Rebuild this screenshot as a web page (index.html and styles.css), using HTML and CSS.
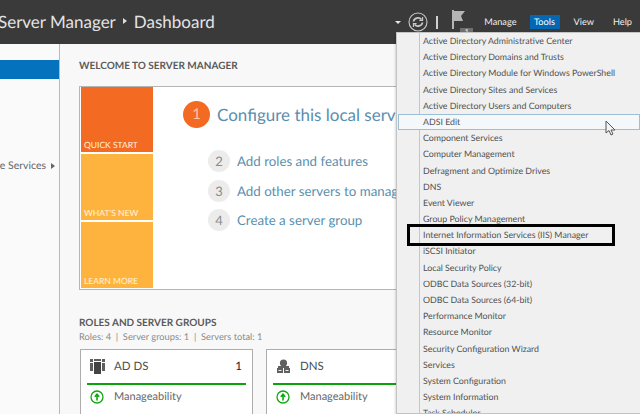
FILE: index.html
```html
<!DOCTYPE html>
<html lang="en">
<head>
<meta charset="utf-8">
<title>Server Manager</title>
<link rel="stylesheet" href="styles.css">
</head>
<body>
<header class="topbar">
  <div class="title"><span>Server Manager</span><i class="crumb"></i><span>Dashboard</span></div>
  <div class="tools">
    <i class="drop"></i>
    <svg class="refresh" width="20" height="20" viewBox="0 0 20 20" fill="none" stroke="#c9c9c9"><circle cx="10" cy="10" r="9" stroke-width="1.1"/><path d="M5.500 9.500a4.500 4 0 0 1 8-2M14.500 10.500a4.500 4 0 0 1-8 2" stroke-width="1.700"/><path d="M14.600 5v3.400h-3.200M5.400 15v-3.400h3.200" stroke-width="1.100"/></svg>
    <i class="divider"></i>
    <div class="flag">
      <svg width="15" height="20" viewBox="0 0 15 20"><path d="M0 0h2v19H0z" fill="#b5b5b5"/><path d="M2 1h11l-4 5 2 5H2z" fill="#b5b5b5"/></svg>
      <b>1</b>
    </div>
    <nav class="menu-bar">
      <span>Manage</span><span class="on">Tools</span><span>View</span><span>Help</span>
    </nav>
  </div>
</header>
<div class="page">
  <aside class="side">
    <div class="side-active"></div>
    <div class="side-item"><span>File and Storage Services</span><i></i></div>
  </aside>
  <main class="main">
    <h2 class="h">WELCOME TO SERVER MANAGER</h2>
    <section class="welcome">
      <div class="tiles">
        <div class="tile t1">QUICK START</div>
        <div class="tile t2">WHAT'S NEW</div>
        <div class="tile t3">LEARN MORE</div>
      </div>
      <div class="steps">
        <div class="step-main"><b>1</b><span>Configure this local server</span></div>
        <div class="step"><b>2</b><span>Add roles and features</span></div>
        <div class="step"><b>3</b><span>Add other servers to manage</span></div>
        <div class="step"><b>4</b><span>Create a server group</span></div>
      </div>
    </section>
    <h2 class="h h2">ROLES AND SERVER GROUPS</h2>
    <p class="sub">Roles: 4 &nbsp;|&nbsp; Server groups: 1 &nbsp;|&nbsp; Servers total: 1</p>
    <div class="cards">
      <article class="card">
        <div class="card-head">
          <svg width="15" height="15" viewBox="0 0 15 15" fill="#5f5f5f"><path d="M0 0h3v3H0zM0 4h3v8H0zM12 0h3v3h-3zM12 4h3v8h-3zM4 0h7v2H4z"/><path d="M4 3h7v12H4z" fill="#444"/></svg>
          <span>AD DS</span><em>1</em>
        </div>
        <div class="card-row"><svg width="14" height="14" viewBox="0 0 14 14" fill="none" stroke="#10a810"><circle cx="7" cy="7" r="6" stroke-width="1.300"/><path d="M7 10.500V4.500M4.800 6.800 7 4.300l2.200 2.500" stroke-width="1.600"/></svg><span>Manageability</span></div>
      </article>
      <article class="card">
        <div class="card-head">
          <svg width="15" height="15" viewBox="0 0 15 15" fill="#5f5f5f"><circle cx="7.500" cy="4" r="3.600"/><path d="M2 7h11v2H2zM1 9h6v5H1zM8 9h6v5H8z"/><path d="M2.500 11h3v1h-3zM9.500 11h3v1h-3z" fill="#eee"/></svg>
          <span>DNS</span>
        </div>
        <div class="card-row"><svg width="14" height="14" viewBox="0 0 14 14" fill="none" stroke="#10a810"><circle cx="7" cy="7" r="6" stroke-width="1.300"/><path d="M7 10.500V4.500M4.800 6.800 7 4.300l2.200 2.500" stroke-width="1.600"/></svg><span>Manageability</span></div>
      </article>
    </div>
  </main>
</div>
<ul class="dropdown">
  <li>Active Directory Administrative Center</li>
  <li>Active Directory Domains and Trusts</li>
  <li>Active Directory Module for Windows PowerShell</li>
  <li>Active Directory Sites and Services</li>
  <li>Active Directory Users and Computers</li>
  <li class="hover">ADSI Edit</li>
  <li>Component Services</li>
  <li>Computer Management</li>
  <li>Defragment and Optimize Drives</li>
  <li>DNS</li>
  <li>Event Viewer</li>
  <li>Group Policy Management</li>
  <li class="boxed">Internet Information Services (IIS) Manager</li>
  <li>iSCSI Initiator</li>
  <li>Local Security Policy</li>
  <li>ODBC Data Sources (32-bit)</li>
  <li>ODBC Data Sources (64-bit)</li>
  <li>Performance Monitor</li>
  <li>Resource Monitor</li>
  <li>Security Configuration Wizard</li>
  <li>Services</li>
  <li>System Configuration</li>
  <li>System Information</li>
  <li>Task Scheduler</li>
</ul>
<svg class="cursor" width="12" height="17" viewBox="0 0 12 17"><path d="M1 1v12l3-2.500L6 15l2-1-2-4h4z" fill="#f4f4f4" stroke="#555" stroke-width="1"/></svg>
</body>
</html>
```
FILE: styles.css
```css
*, ::before, ::after { box-sizing: border-box; }
html, body { margin: 0; height: 414px; overflow: hidden; }
body { width: 640px; position: relative; background: #f8f8f8; font-family: "Lato", "Noto Sans", sans-serif; color: #555; text-rendering: geometricPrecision; }
i, em { font-style: normal; }

.topbar { height: 44px; background: #3a3a3a; display: flex; justify-content: space-between; align-items: center; color: #e8e8e8; box-shadow: 0 1px 0 #2b2b2b; }
.title { margin-left: -2px; display: flex; align-items: center; font-size: 17px; gap: 7px; color: #e4e4e4; padding-bottom: 2px; }
.crumb { width: 0; height: 0; border-left: 4px solid #ddd; border-top: 3px solid transparent; border-bottom: 3px solid transparent; }
.tools { display: flex; align-items: center; height: 44px; }
.drop { width: 0; height: 0; border-top: 3px solid #e5e5e5; border-left: 3px solid transparent; border-right: 3px solid transparent; margin-right: 7px; }
.refresh { margin-right: 8px; }
.divider { width: 2px; height: 13px; background: #cfcfcf; margin-right: 14px; }
.flag { position: relative; width: 21px; height: 26px; margin-right: 7px; margin-top: 2px; }
.flag b { position: absolute; left: 8px; bottom: 0; width: 13px; height: 8px; background: #6f6f6f; color: #ddd; font-size: 7px; line-height: 8px; text-align: center; }
.menu-bar { display: flex; align-items: center; font-size: 9.200px; color: #eee; }
.menu-bar span { padding: 0 5px; height: 14px; line-height: 14px; margin-right: 9px; }
.menu-bar span:first-child { margin-right: 8px; padding-left: 4px; }
.menu-bar span:last-child { margin-right: 0; padding-right: 8px; }
.menu-bar .on { width: 30px; padding: 0; text-align: center; background: #0467b4; color: #fff; }

.page { display: grid; grid-template-columns: 60px 1fr; height: 370px; }
.side { background: #fafafa; border-right: 1px solid #b9b9b9; padding-top: 16px; overflow: hidden; }
.side-active { height: 19px; background: #0572bd; }
.side-item { margin-top: 81px; display: flex; justify-content: flex-end; align-items: center; gap: 5px; font-size: 10.500px; padding-right: 4px; white-space: nowrap; color: #666; }
.side-item i { flex: none; width: 0; height: 0; border-left: 4px solid #666; border-top: 3.500px solid transparent; border-bottom: 3.500px solid transparent; }

.main { padding: 15px 0 0 19px; overflow: hidden; background: #f8f8f8; }
.h { margin: 0; font-size: 10px; line-height: 14px; font-weight: 700; color: #5a5a5a; white-space: nowrap; }
.welcome { margin-top: 13px; width: 600px; height: 204px; border: 1px solid #b5b5b5; background: #fff; display: flex; }
.tiles { width: 73px; padding: 0 0 0 1px; display: flex; flex-direction: column; gap: 2px; }
.tile { background: #feb33f; color: #fff3dd; font-size: 8.500px; padding: 0 3px 2px 3px; display: flex; align-items: flex-end; height: 66px; }
.t1 { background: #f36a22; height: 65px; }
.steps { padding-top: 14px; padding-left: 30px; }
.step-main { display: flex; align-items: center; gap: 7px; color: #5a8fae; font-size: 17px; white-space: nowrap; height: 27px; }
.step-main b { width: 27px; height: 27px; border-radius: 50%; background: #f36a22; color: #fbc7a2; font-weight: 400; font-size: 15px; text-align: center; line-height: 27px; }
.step { display: flex; align-items: center; gap: 7px; margin: 7.500px 0 0 25px; color: #5a8fae; font-size: 13.300px; white-space: nowrap; height: 22px; }
.step:nth-child(2) { margin-top: 22px; }
.step b { width: 22px; height: 22px; border-radius: 50%; background: #ececec; color: #8b8b8b; font-weight: 400; font-size: 13px; text-align: center; line-height: 22px; }

.h2 { margin-top: 26px; }
.sub { margin: 0; font-size: 9.300px; line-height: 13px; color: #8a8a8a; white-space: nowrap; }
.cards { display: flex; gap: 13px; margin-top: 6px; margin-left: 1px; }
.card { flex: none; width: 173px; height: 70px; background: #fff; border: 1px solid #adadad; padding: 0 6px; }
.card-head { display: flex; align-items: center; height: 35px; gap: 9px; padding: 0 4px 0 3px; border-bottom: 2px solid #0aa30a; font-size: 11.500px; color: #4f4f4f; }
.card-head em { margin-left: auto; color: #222; }
.card-row { display: flex; align-items: center; gap: 10px; height: 23px; padding-left: 3px; font-size: 11px; color: #666; }

.dropdown { position: absolute; left: 396px; top: 32px; width: 244px; height: 382px; margin: 0; padding: 0; list-style: none; background: #f0f0f0; border: 1px solid #c4c4c4; border-right: 0; overflow: hidden; box-shadow: -1px 1px 2px rgba(0,0,0,.15); }
.dropdown::before { content: ""; position: absolute; left: 22px; top: 0; bottom: 0; width: 1px; background: #c6c6c6; }
.dropdown li { position: relative; height: 16.200px; line-height: 16.200px; padding-left: 26px; font-size: 8.800px; color: #505050; white-space: nowrap; }
.dropdown .hover { margin-left: 1px; padding-left: 25px; background: #f5f8fb; box-shadow: inset 0 0 0 1px #9fbdd3; }
.dropdown .boxed::after { content: ""; position: absolute; left: 10px; top: -3px; width: 208px; height: 22px; border: 3px solid #000; }
.cursor { position: absolute; left: 605px; top: 120px; }
```
